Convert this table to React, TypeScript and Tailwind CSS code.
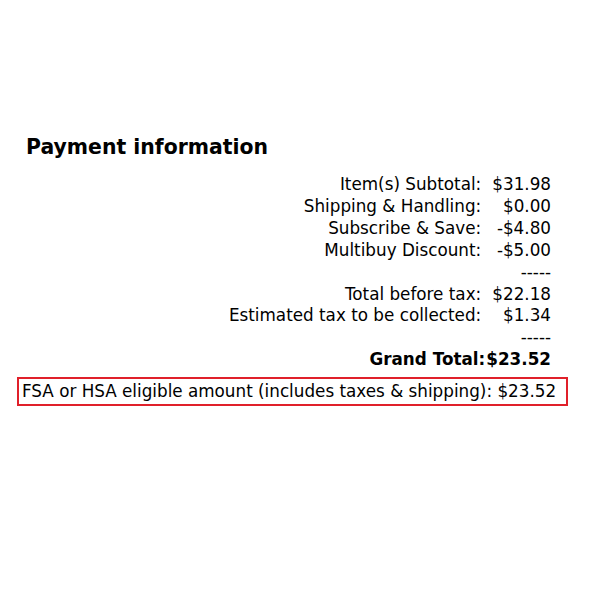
const rows: [string, string][] = [
  ["Item(s) Subtotal:", "$31.98"],
  ["Shipping & Handling:", "$0.00"],
  ["Subscribe & Save:", "-$4.80"],
  ["Multibuy Discount:", "-$5.00"],
  ["", "-----"],
  ["Total before tax:", "$22.18"],
  ["Estimated tax to be collected:", "$1.34"],
  ["", "-----"],
];

export default function App() {
  return (
    <div
      className="w-[600px] h-[600px] bg-white text-black"
      style={{ fontFamily: '"DejaVu Sans", Verdana, sans-serif' }}
    >
      <div className="pt-[133px] pl-[26px]">
        <h2 className="text-[20.4px] font-bold leading-[28px]">Payment information</h2>
      </div>
      <div className="flex justify-end pr-[49px] mt-[13px]">
        <div className="grid grid-cols-[auto_auto] gap-x-[5px] text-[16.8px] leading-[21.9px]">
          {rows.map(([label, value], i) => (
            <div key={i} className="contents">
              <div className="text-right">{label}</div>
              <div className="text-right">{value}</div>
            </div>
          ))}
          <div className="text-right font-bold -mr-[4px]">Grand Total:</div>
          <div className="text-right font-bold">$23.52</div>
        </div>
      </div>
      <div className="pl-[17px] mt-[6px]">
        <div className="inline-block border-2 border-[#e0202a] pl-[3px] pr-[10px] text-[16.8px] leading-[25px]">
          FSA or HSA eligible amount (includes taxes &amp; shipping): $23.52
        </div>
      </div>
    </div>
  );
}
